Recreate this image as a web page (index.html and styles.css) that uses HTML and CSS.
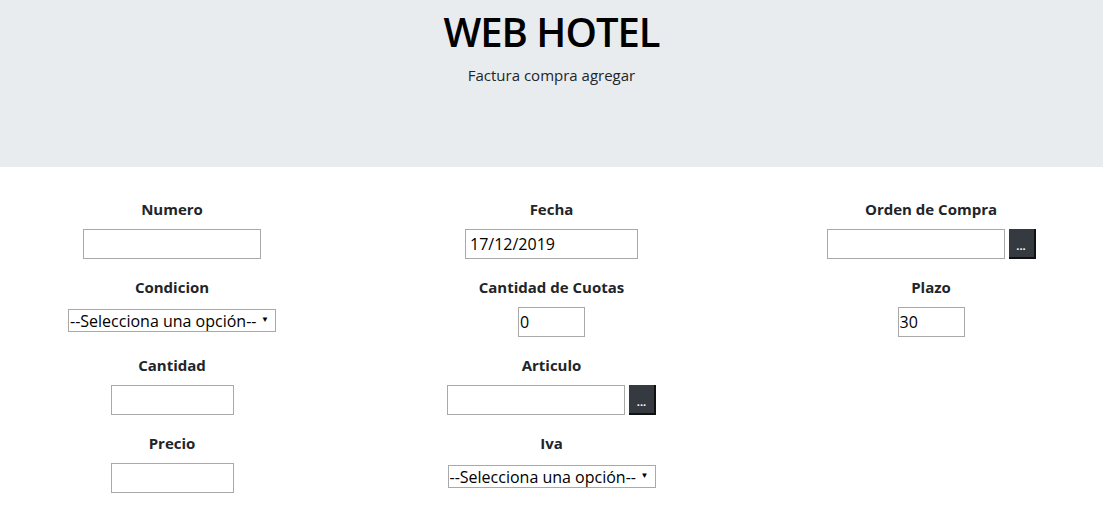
FILE: index.html
```html
<!DOCTYPE html>
<html lang="es">
<head>
<meta charset="utf-8">
<title>WEB HOTEL</title>
<link rel="stylesheet" href="styles.css">
</head>
<body>
<header class="jumbo">
  <h1 class="jumbo-title">WEB HOTEL</h1>
  <p class="jumbo-sub">Factura compra agregar</p>
</header>
<main class="form-grid">
  <div class="field">
    <label class="field-label">Numero</label>
    <input class="inp inp-md" type="text">
  </div>
  <div class="field">
    <label class="field-label">Fecha</label>
    <input class="inp inp-date" type="text" value="17/12/2019">
  </div>
  <div class="field">
    <label class="field-label">Orden de Compra</label>
    <div class="group">
      <input class="inp inp-md" type="text">
      <button class="btn-dots" type="button">...</button>
    </div>
  </div>

  <div class="field">
    <label class="field-label">Condicion</label>
    <div class="sel"><span>--Selecciona una opción--</span><span class="caret">▼</span></div>
  </div>
  <div class="field">
    <label class="field-label">Cantidad de Cuotas</label>
    <input class="inp inp-xs" type="text" value="0">
  </div>
  <div class="field">
    <label class="field-label">Plazo</label>
    <input class="inp inp-xs" type="text" value="30">
  </div>

  <div class="field">
    <label class="field-label">Cantidad</label>
    <input class="inp inp-sm" type="text">
  </div>
  <div class="field">
    <label class="field-label">Articulo</label>
    <div class="group">
      <input class="inp inp-md" type="text">
      <button class="btn-dots" type="button">...</button>
    </div>
  </div>
  <div class="field"></div>

  <div class="field">
    <label class="field-label">Precio</label>
    <input class="inp inp-sm" type="text">
  </div>
  <div class="field">
    <label class="field-label">Iva</label>
    <div class="sel"><span>--Selecciona una opción--</span><span class="caret">▼</span></div>
  </div>
  <div class="field"></div>
</main>
</body>
</html>
```
FILE: styles.css
```css
* { box-sizing: border-box; }
html, body { margin: 0; padding: 0; }
body {
  font-family: "Open Sans", "Noto Sans", sans-serif;
  color: #212529;
  background: #fff;
  font-size: 16px;
}
.jumbo {
  background: #e9ecef;
  height: 167px;
  text-align: center;
  padding-top: 8px;
}
.jumbo-title {
  margin: 0;
  font-size: 40px;
  line-height: 48px;
  font-weight: 600;
  color: #000;
  letter-spacing: -1px;
}
.jumbo-sub {
  margin: 7px 0 0;
  font-size: 15px;
  line-height: 24px;
  color: #212529;
}
.form-grid {
  display: grid;
  grid-template-columns: 344px 415px 1fr;
  row-gap: 16px;
  padding-top: 30px;
}
.field {
  display: flex;
  flex-direction: column;
  align-items: center;
  height: 62px;
}
.field-label {
  font-weight: 700;
  font-size: 15px;
  line-height: 24px;
  margin-bottom: 8px;
  color: #212529;
}
.inp {
  height: 30px;
  border: 1px solid #a9a9a9;
  background: #fff;
  font-family: inherit;
  font-size: 16px;
  color: #000;
  padding: 0 2px;
  outline: none;
}
.inp-md { width: 178px; }
.inp-sm { width: 123px; }
.inp-xs { width: 67px; padding-left: 1px; }
.inp-date { width: 173px; padding-left: 4px; }
.group {
  display: flex;
  gap: 4px;
}
.btn-dots {
  width: 27px;
  height: 30px;
  background: #343a40;
  border: none;
  border-right: 2px solid #111;
  border-bottom: 2px solid #111;
  color: #fff;
  font-family: inherit;
  font-size: 11px;
  font-weight: 700;
  line-height: 1;
  display: flex;
  align-items: flex-end;
  justify-content: center;
  padding: 0 0 6px;
}
.sel {
  margin-top: 2px;
  width: 208px;
  height: 23px;
  border: 1px solid #a9a9a9;
  background: #fff;
  display: flex;
  align-items: center;
  justify-content: space-between;
  padding: 0 6px 0 1px;
  font-size: 16px;
  color: #000;
  white-space: nowrap;
}
.caret {
  font-size: 8px;
  line-height: 1;
  margin-top: -4px;
}
```
